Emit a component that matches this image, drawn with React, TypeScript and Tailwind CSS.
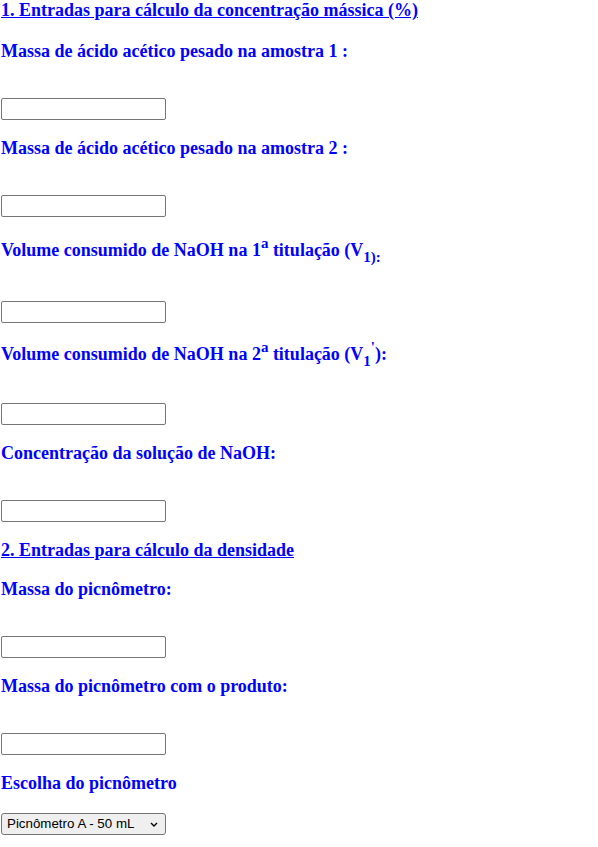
import React from 'react';

const titleCls = "text-[18px] font-bold leading-[normal] underline";
const labelCls = "text-[18px] font-bold";
const supCls = "relative -top-[8px] text-[15px] leading-none";
const subCls = "relative top-[6px] text-[15px] leading-none";

const Field: React.FC<{ children: React.ReactNode; lineCls?: string }> = ({ children, lineCls = 'leading-[normal]' }) => (
  <div className="flex flex-col gap-[36px]">
    <h3 className={`${labelCls} ${lineCls}`}>{children}</h3>
    <input
      type="text"
      className="w-[165px] h-[22px] border border-[#767676] rounded-[2px] bg-white px-[2px] text-[13.33px] text-black outline-none"
    />
  </div>
);

export default function App() {
  return (
    <div
      className="flex flex-col items-start px-px text-[#0000ff] bg-white min-h-[847px]"
      style={{ fontFamily: '"Liberation Serif", "Times New Roman", serif' }}
    >
      <section className="flex flex-col gap-[18px]">
        <h3 className={`${titleCls} mb-[2px]`}>1. Entradas para cálculo da concentração mássica (%)</h3>
        <Field>Massa de ácido acético pesado na amostra 1 :</Field>
        <Field>Massa de ácido acético pesado na amostra 2 :</Field>
        <Field lineCls="leading-[30px]">
          Volume consumido de NaOH na 1<sup className={supCls}>a</sup> titulação (V
          <sub className={subCls}>1):</sub>
        </Field>
        <Field lineCls="leading-[26px]">
          Volume consumido de NaOH na 2<sup className={supCls}>a</sup> titulação (V
          <sub className={subCls}>1</sub>
          <sup className={supCls}>'</sup>):
        </Field>
        <Field>Concentração da solução de NaOH:</Field>
      </section>

      <section className="flex flex-col gap-[18px] mt-[18px]">
        <h3 className={titleCls}>2. Entradas para cálculo da densidade</h3>
        <Field>Massa do picnômetro:</Field>
        <Field>Massa do picnômetro com o produto:</Field>
        <div className="flex flex-col gap-[19px]">
          <h3 className={`${labelCls} leading-[normal]`}>Escolha do picnômetro</h3>
          <div className="relative w-[165px] h-[22px]">
            <select
              className="appearance-none block w-[165px] h-[22px] border border-[#767676] rounded-[3px] bg-[#efefef] pl-[5px] pr-[20px] text-[13.33px] text-black outline-none"
              style={{ fontFamily: '"Liberation Sans", Arial, sans-serif' }}
              defaultValue="A"
            >
              <option value="A">Picnômetro A - 50 mL</option>
              <option value="B">Picnômetro B - 25 mL</option>
            </select>
            <svg className="absolute right-[8px] top-[9px] pointer-events-none" width="8" height="5" viewBox="0 0 8 5">
              <path d="M1 1 L4 4 L7 1" fill="none" stroke="#000" strokeWidth="1.4" />
            </svg>
          </div>
        </div>
      </section>
    </div>
  );
}
